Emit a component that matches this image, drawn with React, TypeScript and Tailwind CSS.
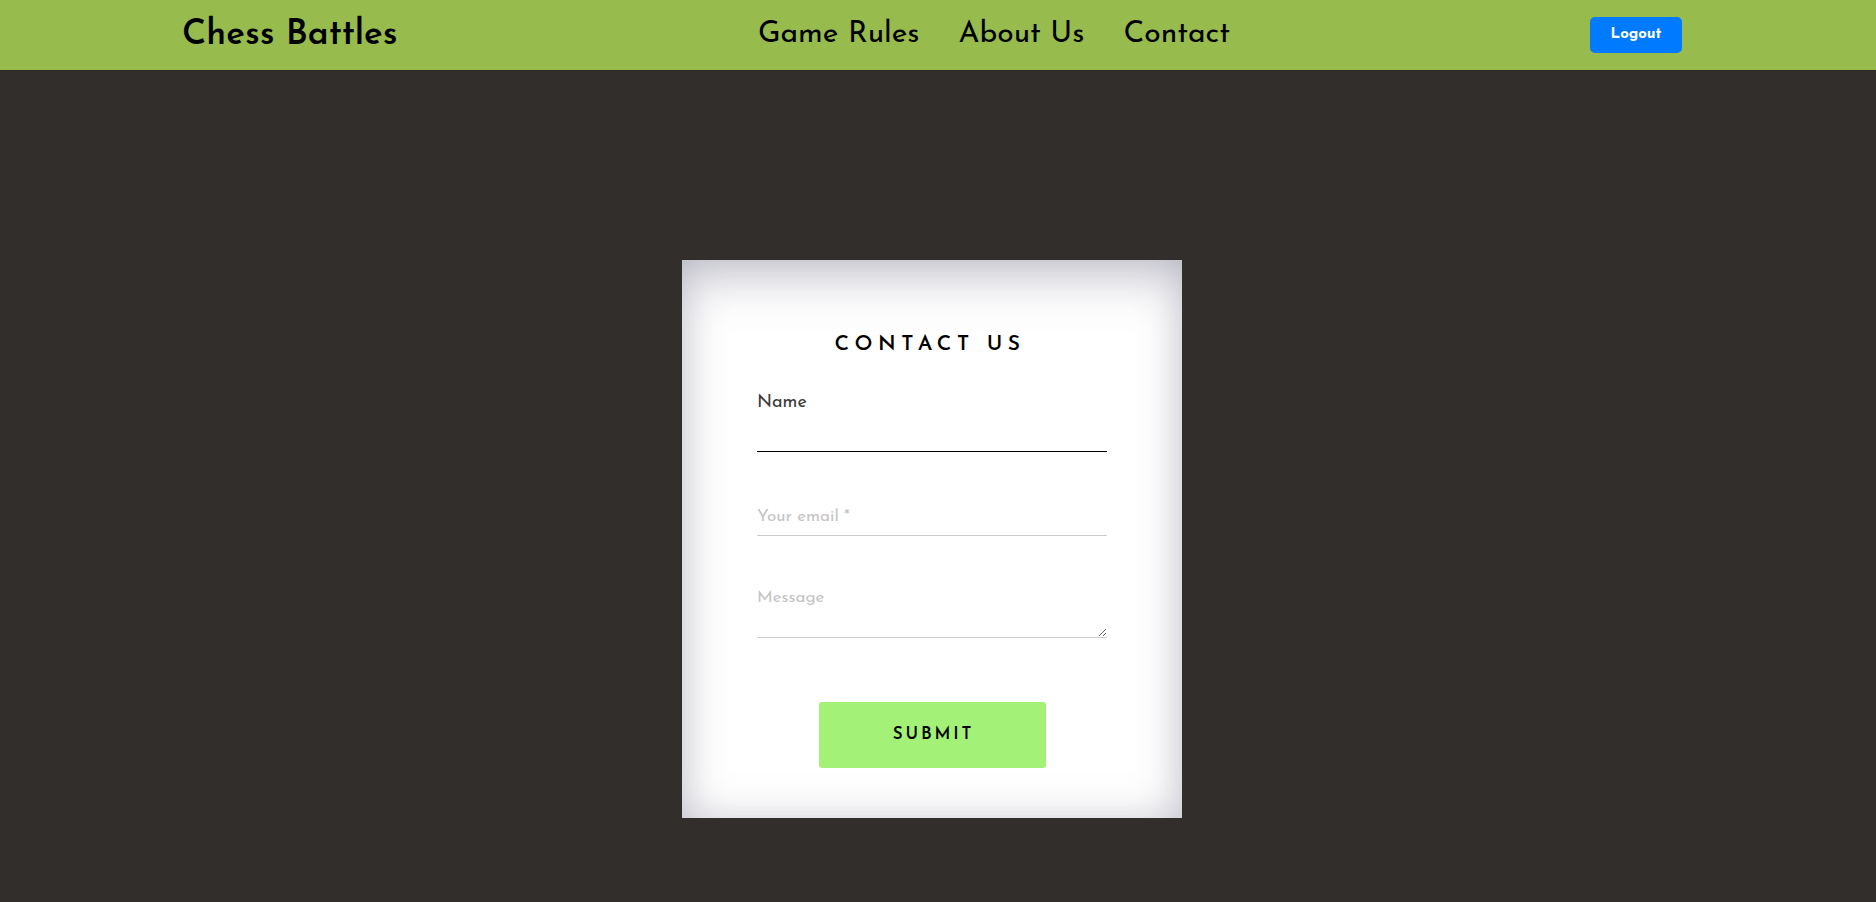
import React, { useState } from 'react';

const font = { fontFamily: '"Josefin Sans", Lato, "Open Sans", sans-serif' };

const App: React.FC = () => {
  const [name, setName] = useState('');
  const [email, setEmail] = useState('');
  const [message, setMessage] = useState('');

  return (
    <div className="min-h-[902px] bg-[#322e2b]" style={font}>
      <header className="h-[71px] bg-[#97bb4d] border-b border-[#2a2a22] flex items-center pl-[182px] pr-[194px]">
        <div className="w-[576px] text-[35px] font-semibold text-black leading-none">Chess Battles</div>
        <nav className="flex items-center gap-[39px] text-[30px] text-black leading-none">
          <a href="#">Game Rules</a>
          <a href="#">About Us</a>
          <a href="#">Contact</a>
        </nav>
        <button className="ml-auto w-[92px] h-[36px] rounded-[5px] bg-[#007bff] text-white text-[15px] font-bold">
          Logout
        </button>
      </header>

      <main className="pt-[189px]">
        <div className="ml-[682px] w-[500px] h-[558px] bg-white shadow-[inset_0_0_40px_rgba(120,120,140,0.35),inset_0_30px_50px_-10px_rgba(120,120,140,0.3)] px-[75px] pt-[74px]">
          <h2 className="text-center text-[21px] font-semibold tracking-[0.26em] pr-[4px] text-black leading-none">
            CONTACT US
          </h2>

          <form className="mt-[39px]">
            <label className="block text-[18px] font-normal text-[#3a3a3a] leading-none">Name</label>
            <input
              value={name}
              onChange={(e) => setName(e.target.value)}
              className="block w-full h-[40px] border-b border-black outline-none bg-transparent"
            />

            <input
              value={email}
              onChange={(e) => setEmail(e.target.value)}
              placeholder="Your email *"
              className="mt-[45px] block w-full h-[39px] pt-[1px] border-b border-[#cccccc] outline-none bg-transparent text-[17px] placeholder:text-[#c4c4c4]"
            />

            <textarea
              value={message}
              onChange={(e) => setMessage(e.target.value)}
              placeholder="Message"
              className="mt-[44px] block w-full h-[58px] pt-[5px] border-b border-[#cccccc] outline-none bg-transparent text-[17px] placeholder:text-[#c4c4c4]"
            />

            <div className="flex justify-center mt-[64px]">
              <button
                type="button"
                className="w-[227px] h-[66px] rounded-[3px] bg-[#a3f176] text-black text-[17px] font-semibold tracking-[0.17em] pl-[3px]"
              >
                SUBMIT
              </button>
            </div>
          </form>
        </div>
      </main>
    </div>
  );
};

export default App;
